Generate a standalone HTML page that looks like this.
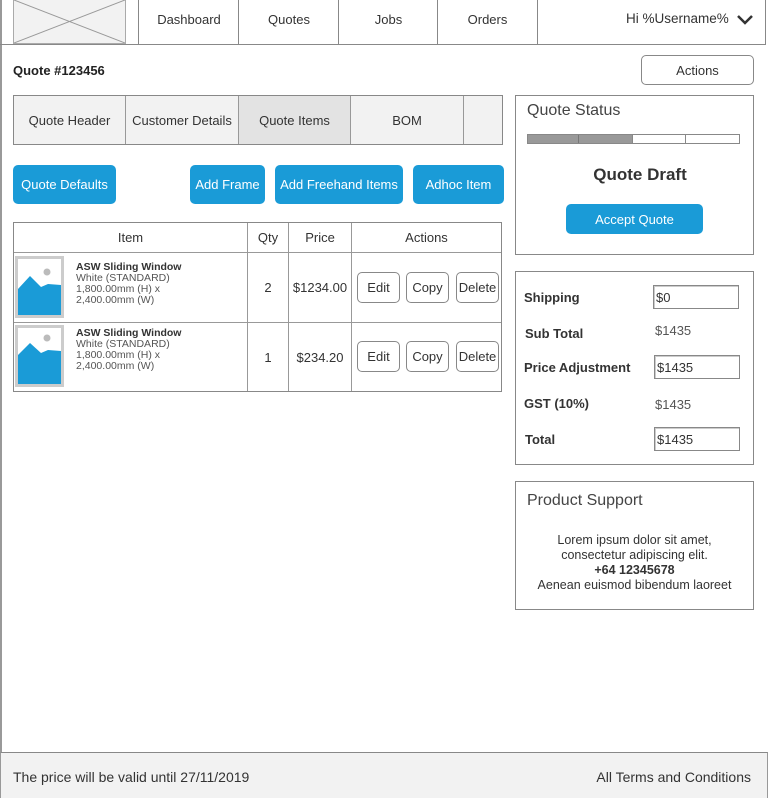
<!DOCTYPE html>
<html><head><meta charset="utf-8"><style>
*{box-sizing:border-box;margin:0;padding:0}
body{width:768px;height:798px;position:relative;background:#fff;font-family:"Liberation Sans",Arial,sans-serif;color:#333;overflow:hidden}
.a{position:absolute}
.c{display:flex;align-items:center;justify-content:center}
.btn{background:#1a9bd7;color:#fff;border-radius:5px;font-size:13px}
.ob{border:1px solid #888;border-radius:5px;background:#fff;font-size:13px;color:#333}
.lbl{font-size:13px;font-weight:bold;color:#333}
.inp{border:1px solid #888;height:24px;width:86px;font-size:13px;padding-left:2px;display:flex;align-items:center;box-shadow:inset 1px 1px 0 #ccc}
</style></head><body>
<div class="a" style="left:0;top:0;width:2px;height:752px;background:#999"></div>
<div class="a" style="left:0;top:44px;width:766px;height:1px;background:#888"></div>
<div class="a" style="left:765px;top:0;width:1px;height:45px;background:#888"></div>
<div class="a" style="left:13px;top:0;width:113px;height:44px;background:#f2f2f2;border:1px solid #aaa;border-top:none">
<svg width="111" height="43" style="position:absolute;left:0;top:0"><line x1="0" y1="0" x2="111" y2="43" stroke="#999"/><line x1="111" y1="0" x2="0" y2="43" stroke="#999"/></svg></div>
<div class="a c" style="left:138px;top:0;width:101px;height:44px;border-left:1px solid #888;font-size:13px;padding-bottom:6px">Dashboard</div>
<div class="a c" style="left:238px;top:0;width:101px;height:44px;border-left:1px solid #888;font-size:13px;padding-bottom:6px">Quotes</div>
<div class="a c" style="left:338px;top:0;width:100px;height:44px;border-left:1px solid #888;font-size:13px;padding-bottom:6px">Jobs</div>
<div class="a c" style="left:437px;top:0;width:100px;height:44px;border-left:1px solid #888;font-size:13px;padding-bottom:6px">Orders</div>
<div class="a" style="left:537px;top:0;width:1px;height:44px;background:#888"></div>
<div class="a" style="left:626px;top:11px;font-size:13.5px">Hi %Username%</div>
<svg class="a" style="left:736px;top:12px" width="18" height="14"><path d="M2 4 L9 11 L16 4" stroke="#333" stroke-width="2.5" fill="none"/></svg>
<div class="a" style="left:13px;top:63px;font-size:13px;font-weight:bold;color:#222">Quote #123456</div>
<div class="a c ob" style="left:641px;top:55px;width:113px;height:30px">Actions</div>
<div class="a" style="left:13px;top:95px;width:490px;height:50px;border:1px solid #888;background:#f2f2f2"></div>
<div class="a c" style="left:14px;top:96px;width:112px;height:48px;font-size:13px;border-right:1px solid #999">Quote Header</div>
<div class="a c" style="left:126px;top:96px;width:113px;height:48px;font-size:13px;border-right:1px solid #999">Customer Details</div>
<div class="a c" style="left:239px;top:96px;width:112px;height:48px;font-size:13px;border-right:1px solid #999;background:#e3e3e3">Quote Items</div>
<div class="a c" style="left:351px;top:96px;width:113px;height:48px;font-size:13px;border-right:1px solid #999">BOM</div>
<div class="a c btn" style="left:13px;top:165px;width:103px;height:39px">Quote Defaults</div>
<div class="a c btn" style="left:190px;top:165px;width:75px;height:39px">Add Frame</div>
<div class="a c btn" style="left:275px;top:165px;width:128px;height:39px">Add Freehand Items</div>
<div class="a c btn" style="left:413px;top:165px;width:91px;height:39px">Adhoc Item</div>
<div class="a" style="left:13px;top:222px;width:489px;height:170px;border:1px solid #888"></div>
<div class="a" style="left:14px;top:252px;width:487px;height:1px;background:#999"></div>
<div class="a" style="left:14px;top:322px;width:487px;height:1px;background:#999"></div>
<div class="a" style="left:247px;top:223px;width:1px;height:168px;background:#999"></div>
<div class="a" style="left:288px;top:223px;width:1px;height:168px;background:#999"></div>
<div class="a" style="left:351px;top:223px;width:1px;height:168px;background:#999"></div>
<div class="a c" style="left:14px;top:223px;width:233px;height:29px;font-size:13px">Item</div>
<div class="a c" style="left:248px;top:223px;width:40px;height:29px;font-size:13px">Qty</div>
<div class="a c" style="left:289px;top:223px;width:62px;height:29px;font-size:13px">Price</div>
<div class="a c" style="left:352px;top:223px;width:149px;height:29px;font-size:13px">Actions</div>
<div class="a" style="left:15px;top:256px;width:49px;height:62px;border:3px solid #ccc;background:#fff"><svg width="43" height="56"><circle cx="29" cy="13" r="3.5" fill="#bbb"/><path d="M0 30 L12 17 L23 28 L30 25 L43 26 L43 56 L0 56Z" fill="#1a9bd7"/></svg></div>
<div class="a" style="left:76px;top:262px;font-size:10.5px;line-height:11px;color:#555"><b style="color:#333">ASW Sliding Window</b><br>White (STANDARD)<br>1,800.00mm (H) x<br>2,400.00mm (W)</div>
<div class="a c" style="left:248px;top:253px;width:40px;height:69px;font-size:13px">2</div>
<div class="a c" style="left:289px;top:253px;width:62px;height:69px;font-size:13px">$1234.00</div>
<div class="a c ob" style="left:357px;top:272px;width:43px;height:31px">Edit</div>
<div class="a c ob" style="left:406px;top:272px;width:43px;height:31px">Copy</div>
<div class="a c ob" style="left:456px;top:272px;width:43px;height:31px">Delete</div>
<div class="a" style="left:15px;top:325px;width:49px;height:62px;border:3px solid #ccc;background:#fff"><svg width="43" height="56"><circle cx="29" cy="10" r="3.5" fill="#bbb"/><path d="M0 27 L12 15 L23 25 L30 22 L43 23 L43 56 L0 56Z" fill="#1a9bd7"/></svg></div>
<div class="a" style="left:76px;top:328px;font-size:10.5px;line-height:11px;color:#555"><b style="color:#333">ASW Sliding Window</b><br>White (STANDARD)<br>1,800.00mm (H) x<br>2,400.00mm (W)</div>
<div class="a c" style="left:248px;top:323px;width:40px;height:68px;font-size:13px">1</div>
<div class="a c" style="left:289px;top:323px;width:62px;height:68px;font-size:13px">$234.20</div>
<div class="a c ob" style="left:357px;top:341px;width:43px;height:31px">Edit</div>
<div class="a c ob" style="left:406px;top:341px;width:43px;height:31px">Copy</div>
<div class="a c ob" style="left:456px;top:341px;width:43px;height:31px">Delete</div>
<div class="a" style="left:515px;top:95px;width:239px;height:160px;border:1px solid #888"></div>
<div class="a" style="left:527px;top:102px;font-size:16px;color:#444">Quote Status</div>
<div class="a" style="left:527px;top:134px;width:213px;height:10px;border:1px solid #888;display:flex">
<div style="width:51px;background:#999;border-right:1px solid #777"></div><div style="width:54px;background:#999;border-right:1px solid #888"></div><div style="width:53px;border-right:1px solid #888"></div><div style="flex:1"></div></div>
<div class="a c" style="left:515px;top:163px;width:250px;height:24px;font-size:17px;font-weight:bold;color:#333">Quote Draft</div>
<div class="a c btn" style="left:566px;top:204px;width:137px;height:30px">Accept Quote</div>
<div class="a" style="left:515px;top:271px;width:239px;height:194px;border:1px solid #888"></div>
<div class="a lbl" style="left:524px;top:290px">Shipping</div>
<div class="a inp" style="left:653px;top:285px">$0</div>
<div class="a lbl" style="left:525px;top:326px">Sub Total</div>
<div class="a" style="left:655px;top:323px;font-size:13px;color:#555">$1435</div>
<div class="a lbl" style="left:524px;top:360px">Price Adjustment</div>
<div class="a inp" style="left:654px;top:355px">$1435</div>
<div class="a lbl" style="left:524px;top:396px">GST (10%)</div>
<div class="a" style="left:655px;top:397px;font-size:13px;color:#555">$1435</div>
<div class="a lbl" style="left:525px;top:432px">Total</div>
<div class="a inp" style="left:654px;top:427px">$1435</div>
<div class="a" style="left:515px;top:481px;width:239px;height:129px;border:1px solid #888"></div>
<div class="a" style="left:527px;top:492px;font-size:16px;color:#444">Product Support</div>
<div class="a" style="left:515px;top:533px;width:239px;text-align:center;font-size:12.5px;line-height:15px;color:#333">Lorem ipsum dolor sit amet,<br>consectetur adipiscing elit.<br><b>+64 12345678</b><br>Aenean euismod bibendum laoreet</div>
<div class="a" style="left:0;top:752px;width:768px;height:46px;background:#f2f2f2;border-top:1px solid #888;border-left:1px solid #999;border-right:1px solid #999"></div>
<div class="a" style="left:13px;top:769px;font-size:14px;color:#333">The price will be valid until 27/11/2019</div>
<div class="a" style="right:17px;top:769px;font-size:14px;color:#333">All Terms and Conditions</div>
</body></html>
